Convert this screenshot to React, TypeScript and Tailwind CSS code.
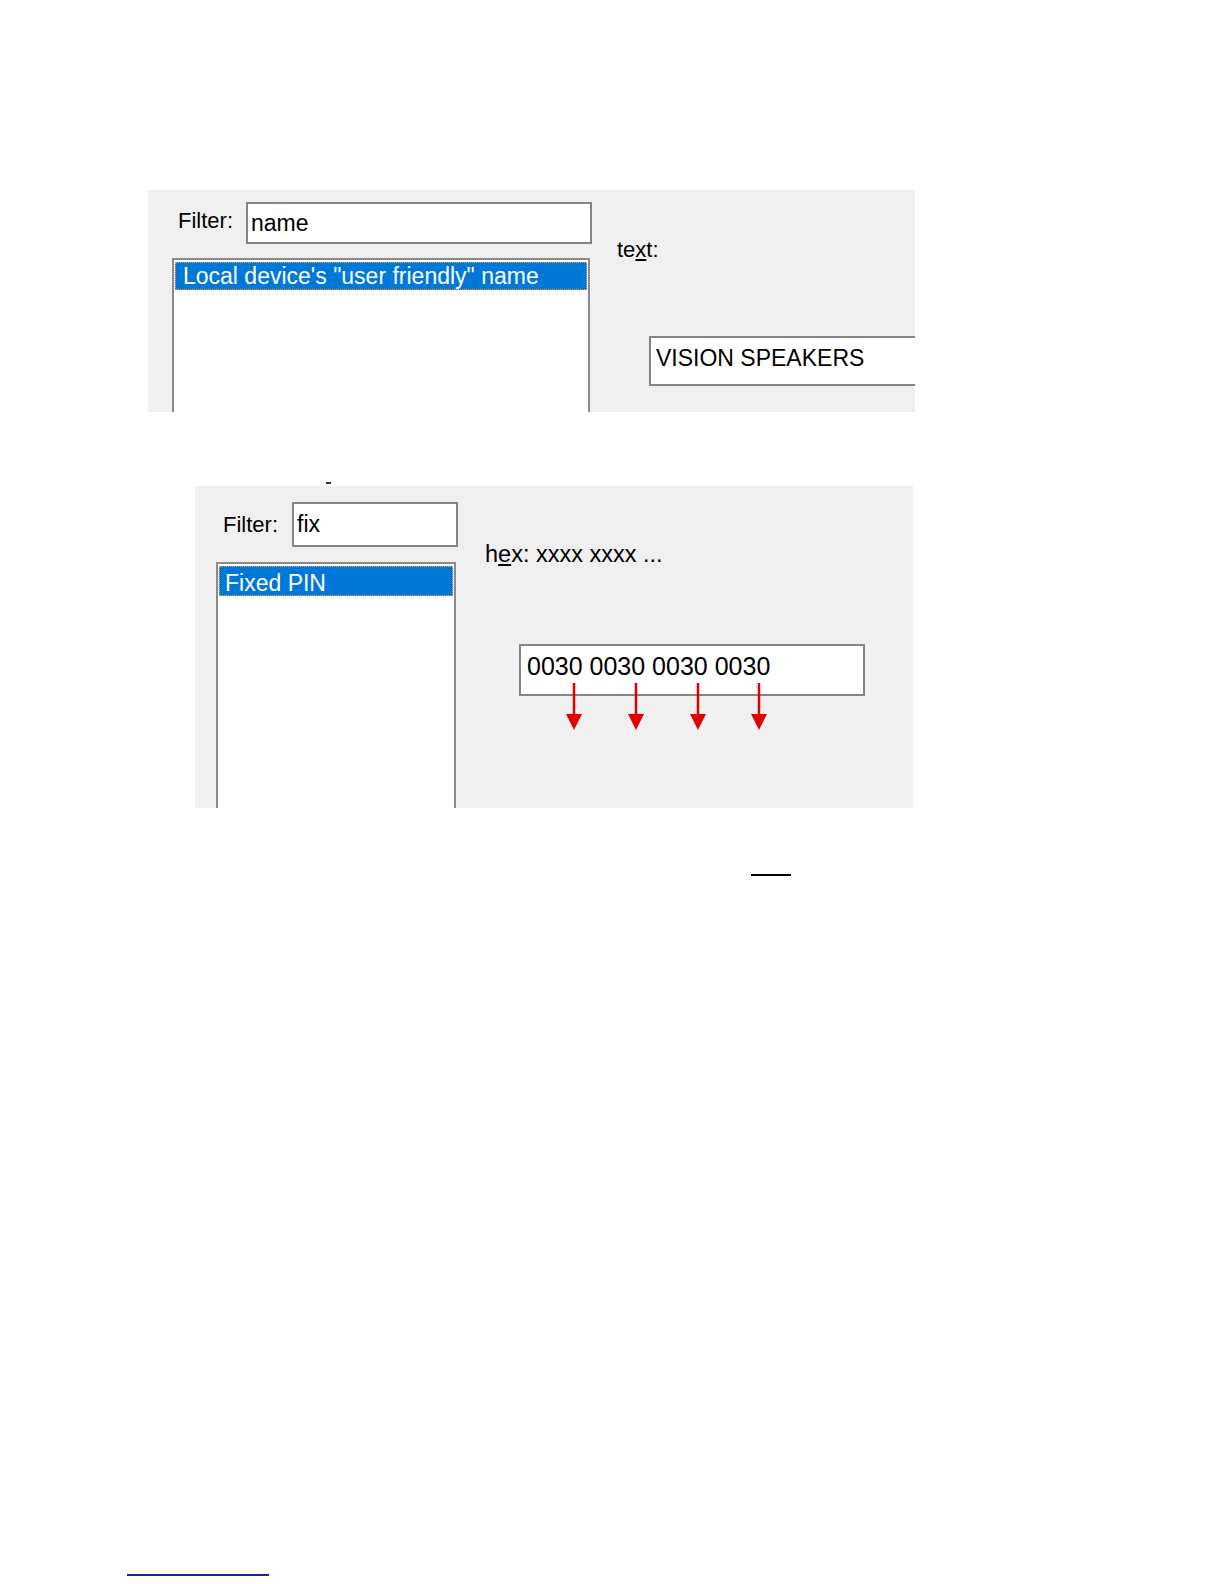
import React from 'react';

const font = { fontFamily: '"Liberation Sans", Arial, sans-serif' };

const DownArrows: React.FC = () => (
    <svg className="absolute left-0 top-0 overflow-visible pointer-events-none" width="346" height="90" viewBox="0 0 346 90">
        {[53, 115, 177, 238].map((x) => (
            <g key={x} fill="#e00000" stroke="#e00000">
                <line x1={x} y1="37" x2={x} y2="70" strokeWidth="2.5" />
                <polygon points={`${x - 8},68 ${x + 8},68 ${x},84`} stroke="none" />
            </g>
        ))}
    </svg>
);

export default function App() {
    return (
        <div className="min-h-[1584px] bg-white flex flex-col items-start pt-[190px] text-black" style={font}>
            {/* First capture: text filter */}
            <div className="ml-[148px] w-[767px] h-[222px] bg-[#f0f0f0] overflow-hidden flex pt-[12px]">
                <div className="w-[444px] pl-[24px] shrink-0">
                    <div className="flex items-center">
                        <span className="ml-[6px] w-[68px] text-[22px] leading-[26px] -mt-[4px]">Filter:</span>
                        <div className="w-[346px] h-[42px] border-2 border-[#858585] bg-white flex items-center pl-[3px] text-[23px]">name</div>
                    </div>
                    <div className="mt-[14px] w-[418px] h-[200px] border-2 border-[#8a8a8a] bg-white px-px pt-[2px]">
                        <div className="h-[28px] bg-[#0078d7] border border-dotted border-[#e0a050] text-white text-[23px] leading-[26px] pl-[7px] flex items-center">
                            Local device's "user friendly" name
                        </div>
                    </div>
                </div>
                <div className="pl-[25px] shrink-0 flex flex-col items-start">
                    <span className="mt-[35px] text-[22px] leading-[26px]">te<span className="underline underline-offset-2">x</span>t:</span>
                    <div className="mt-[73px] ml-[32px] w-[300px] h-[50px] shrink-0 border-2 border-[#858585] bg-white flex items-center pl-[5px] pb-[6px] text-[23px]">VISION SPEAKERS</div>
                </div>
            </div>

            <div className="mt-[70px] ml-[326px] w-[5px] h-[2px] bg-[#333]" />

            {/* Second capture: hex filter */}
            <div className="mt-[2px] ml-[195px] w-[718px] h-[322px] bg-[#f0f0f0] overflow-hidden flex pt-[16px]">
                <div className="w-[263px] pl-[21px] shrink-0">
                    <div className="flex items-center">
                        <span className="ml-[7px] w-[69px] text-[22px] leading-[26px]">Filter:</span>
                        <div className="w-[166px] h-[45px] border-2 border-[#858585] bg-white flex items-center pl-[3px] text-[23px]">fix</div>
                    </div>
                    <div className="mt-[15px] w-[240px] h-[260px] border-2 border-[#8a8a8a] bg-white px-px pt-[2px]">
                        <div className="h-[30px] bg-[#0078d7] border border-dotted border-[#e0a050] text-white text-[23px] leading-[26px] pl-[5px] pt-[3px] flex items-center">
                            Fixed PIN
                        </div>
                    </div>
                </div>
                <div className="pl-[27px] shrink-0 flex flex-col items-start">
                    <span className="mt-[39px] text-[23.5px] leading-[26px]">h<span className="underline underline-offset-2">e</span>x: xxxx xxxx ...</span>
                    <div className="relative mt-[77px] ml-[34px] w-[346px] h-[52px] border-2 border-[#858585] bg-white flex items-center pl-[6px] pb-[6px] text-[25px]">
                        0030 0030 0030 0030
                        <DownArrows />
                    </div>
                </div>
            </div>

            <div className="mt-[66px] ml-[751px] w-[40px] h-[2px] bg-black" />
            <div className="mt-[698px] ml-[127px] w-[142px] h-[2px] bg-[#22228c]" />
        </div>
    );
}
